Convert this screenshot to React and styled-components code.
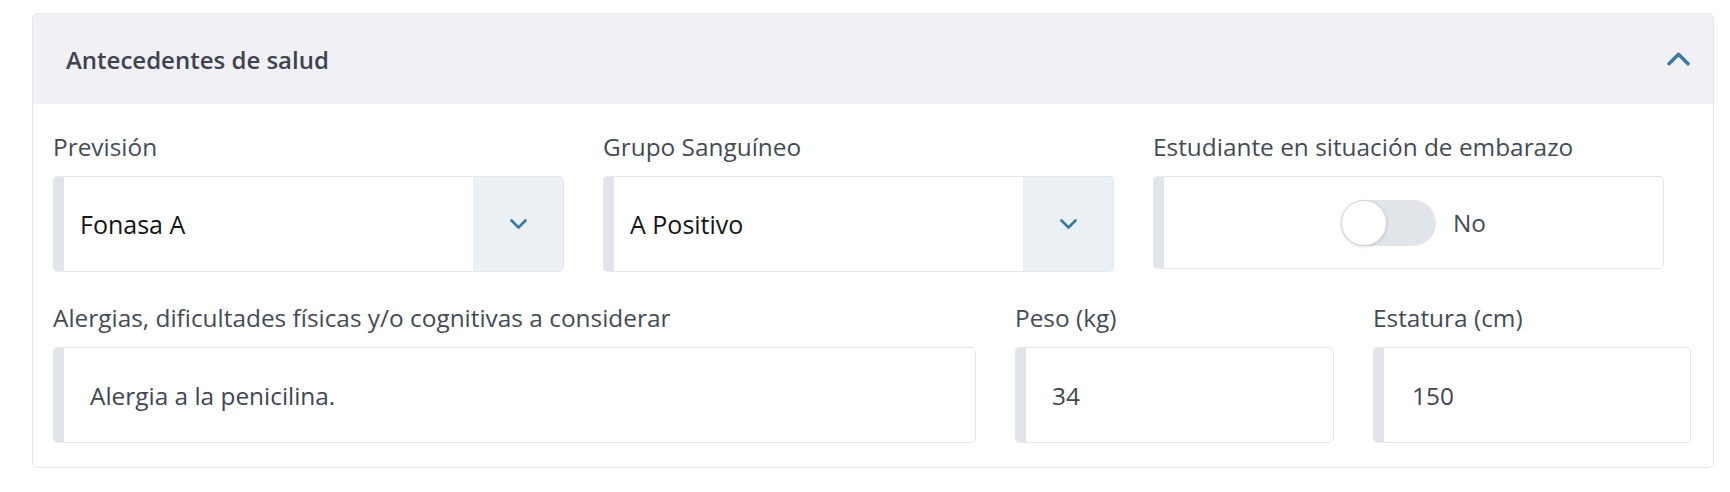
import React from 'react';
import styled, { createGlobalStyle } from 'styled-components';

const GlobalStyle = createGlobalStyle`
  body {
    margin: 0;
    background: #ffffff;
    font-family: "Open Sans", "Noto Sans", sans-serif;
  }
`;

const Page = styled.div`
  padding: 13px 0 0 32px;
  width: 1682px;
`;

const Card = styled.section`
  border: 1px solid #e4e6eb;
  border-radius: 6px;
  overflow: hidden;
  background: #ffffff;
`;

const Header = styled.div`
  height: 90px;
  display: flex;
  align-items: center;
  justify-content: space-between;
  padding: 0 23px 0 33px;
  background: #f1f1f5;
`;

const Title = styled.h2`
  margin: 0;
  font-size: 24px;
  font-weight: 600;
  color: #3d4350;
`;

const Body = styled.div`
  padding: 30px 20px 24px 20px;
  display: flex;
  flex-direction: column;
  gap: 33px;
`;

const Row = styled.div`
  display: grid;
  grid-template-columns: ${(props) => props.cols};
  column-gap: 39px;
`;

const Field = styled.div`
  display: flex;
  flex-direction: column;
  gap: 16px;
`;

const Label = styled.label`
  font-size: 24.4px;
  line-height: 26px;
  color: #454b56;
  white-space: nowrap;
`;

const Box = styled.div`
  height: ${(props) => props.h || 96}px;
  box-sizing: border-box;
  display: flex;
  align-items: center;
  border: 1px solid #e3e6eb;
  border-left: 11px solid #e1e4e9;
  border-radius: 5px;
  overflow: hidden;
  background: #ffffff;
`;

const Value = styled.span`
  flex: 1;
  padding-left: ${(props) => props.pad}px;
  font-size: ${(props) => props.size || 24.4}px;
  color: ${(props) => props.color || '#3f4651'};
`;

const Caret = styled.div`
  width: 90px;
  align-self: stretch;
  display: flex;
  align-items: center;
  justify-content: center;
  background: #ebf0f4;
`;

const ToggleWrap = styled.div`
  flex: 1;
  display: flex;
  align-items: center;
  justify-content: center;
  gap: 17px;
`;

const Track = styled.div`
  width: 95px;
  height: 46px;
  border-radius: 23px;
  background: #e1e4e9;
  position: relative;
`;

const Knob = styled.div`
  position: absolute;
  left: 0;
  top: 0;
  width: 46px;
  height: 46px;
  box-sizing: border-box;
  border-radius: 50%;
  background: #ffffff;
  border: 1px solid #d3d6db;
  box-shadow: 0 1px 3px rgba(0, 0, 0, 0.15);
`;

const ToggleText = styled.span`
  font-size: 24.4px;
  color: #454b56;
`;

const Chevron = ({ up, w = 17, h = 10 }) => (
  <svg width={w} height={h} viewBox="0 0 17 10" fill="none">
    <path
      d={up ? 'M1.5 8.5 L8.5 1.5 L15.5 8.5' : 'M1.5 1.5 L8.5 8.5 L15.5 1.5'}
      stroke="#3b78a5"
      strokeWidth="2.6"
      strokeLinecap="round"
      strokeLinejoin="round"
    />
  </svg>
);

function Select({ value }) {
  return (
    <Box>
      <Value pad={16} size={25} color="#151515">{value}</Value>
      <Caret>
        <Chevron />
      </Caret>
    </Box>
  );
}

export default function App() {
  return (
    <Page>
      <GlobalStyle />
      <Card>
        <Header>
          <Title>Antecedentes de salud</Title>
          <Chevron up w={23} h={14} />
        </Header>
        <Body>
          <Row cols="511px 511px 511px">
            <Field>
              <Label>Previsión</Label>
              <Select value="Fonasa A" />
            </Field>
            <Field>
              <Label>Grupo Sanguíneo</Label>
              <Select value="A Positivo" />
            </Field>
            <Field>
              <Label>Estudiante en situación de embarazo</Label>
              <Box h={93}>
                <ToggleWrap>
                  <Track>
                    <Knob />
                  </Track>
                  <ToggleText>No</ToggleText>
                </ToggleWrap>
              </Box>
            </Field>
          </Row>
          <Row cols="923px 319px 318px">
            <Field>
              <Label>Alergias, dificultades físicas y/o cognitivas a considerar</Label>
              <Box>
                <Value pad={26}>Alergia a la penicilina.</Value>
              </Box>
            </Field>
            <Field>
              <Label>Peso (kg)</Label>
              <Box>
                <Value pad={26}>34</Value>
              </Box>
            </Field>
            <Field>
              <Label>Estatura (cm)</Label>
              <Box>
                <Value pad={28}>150</Value>
              </Box>
            </Field>
          </Row>
        </Body>
      </Card>
    </Page>
  );
}
